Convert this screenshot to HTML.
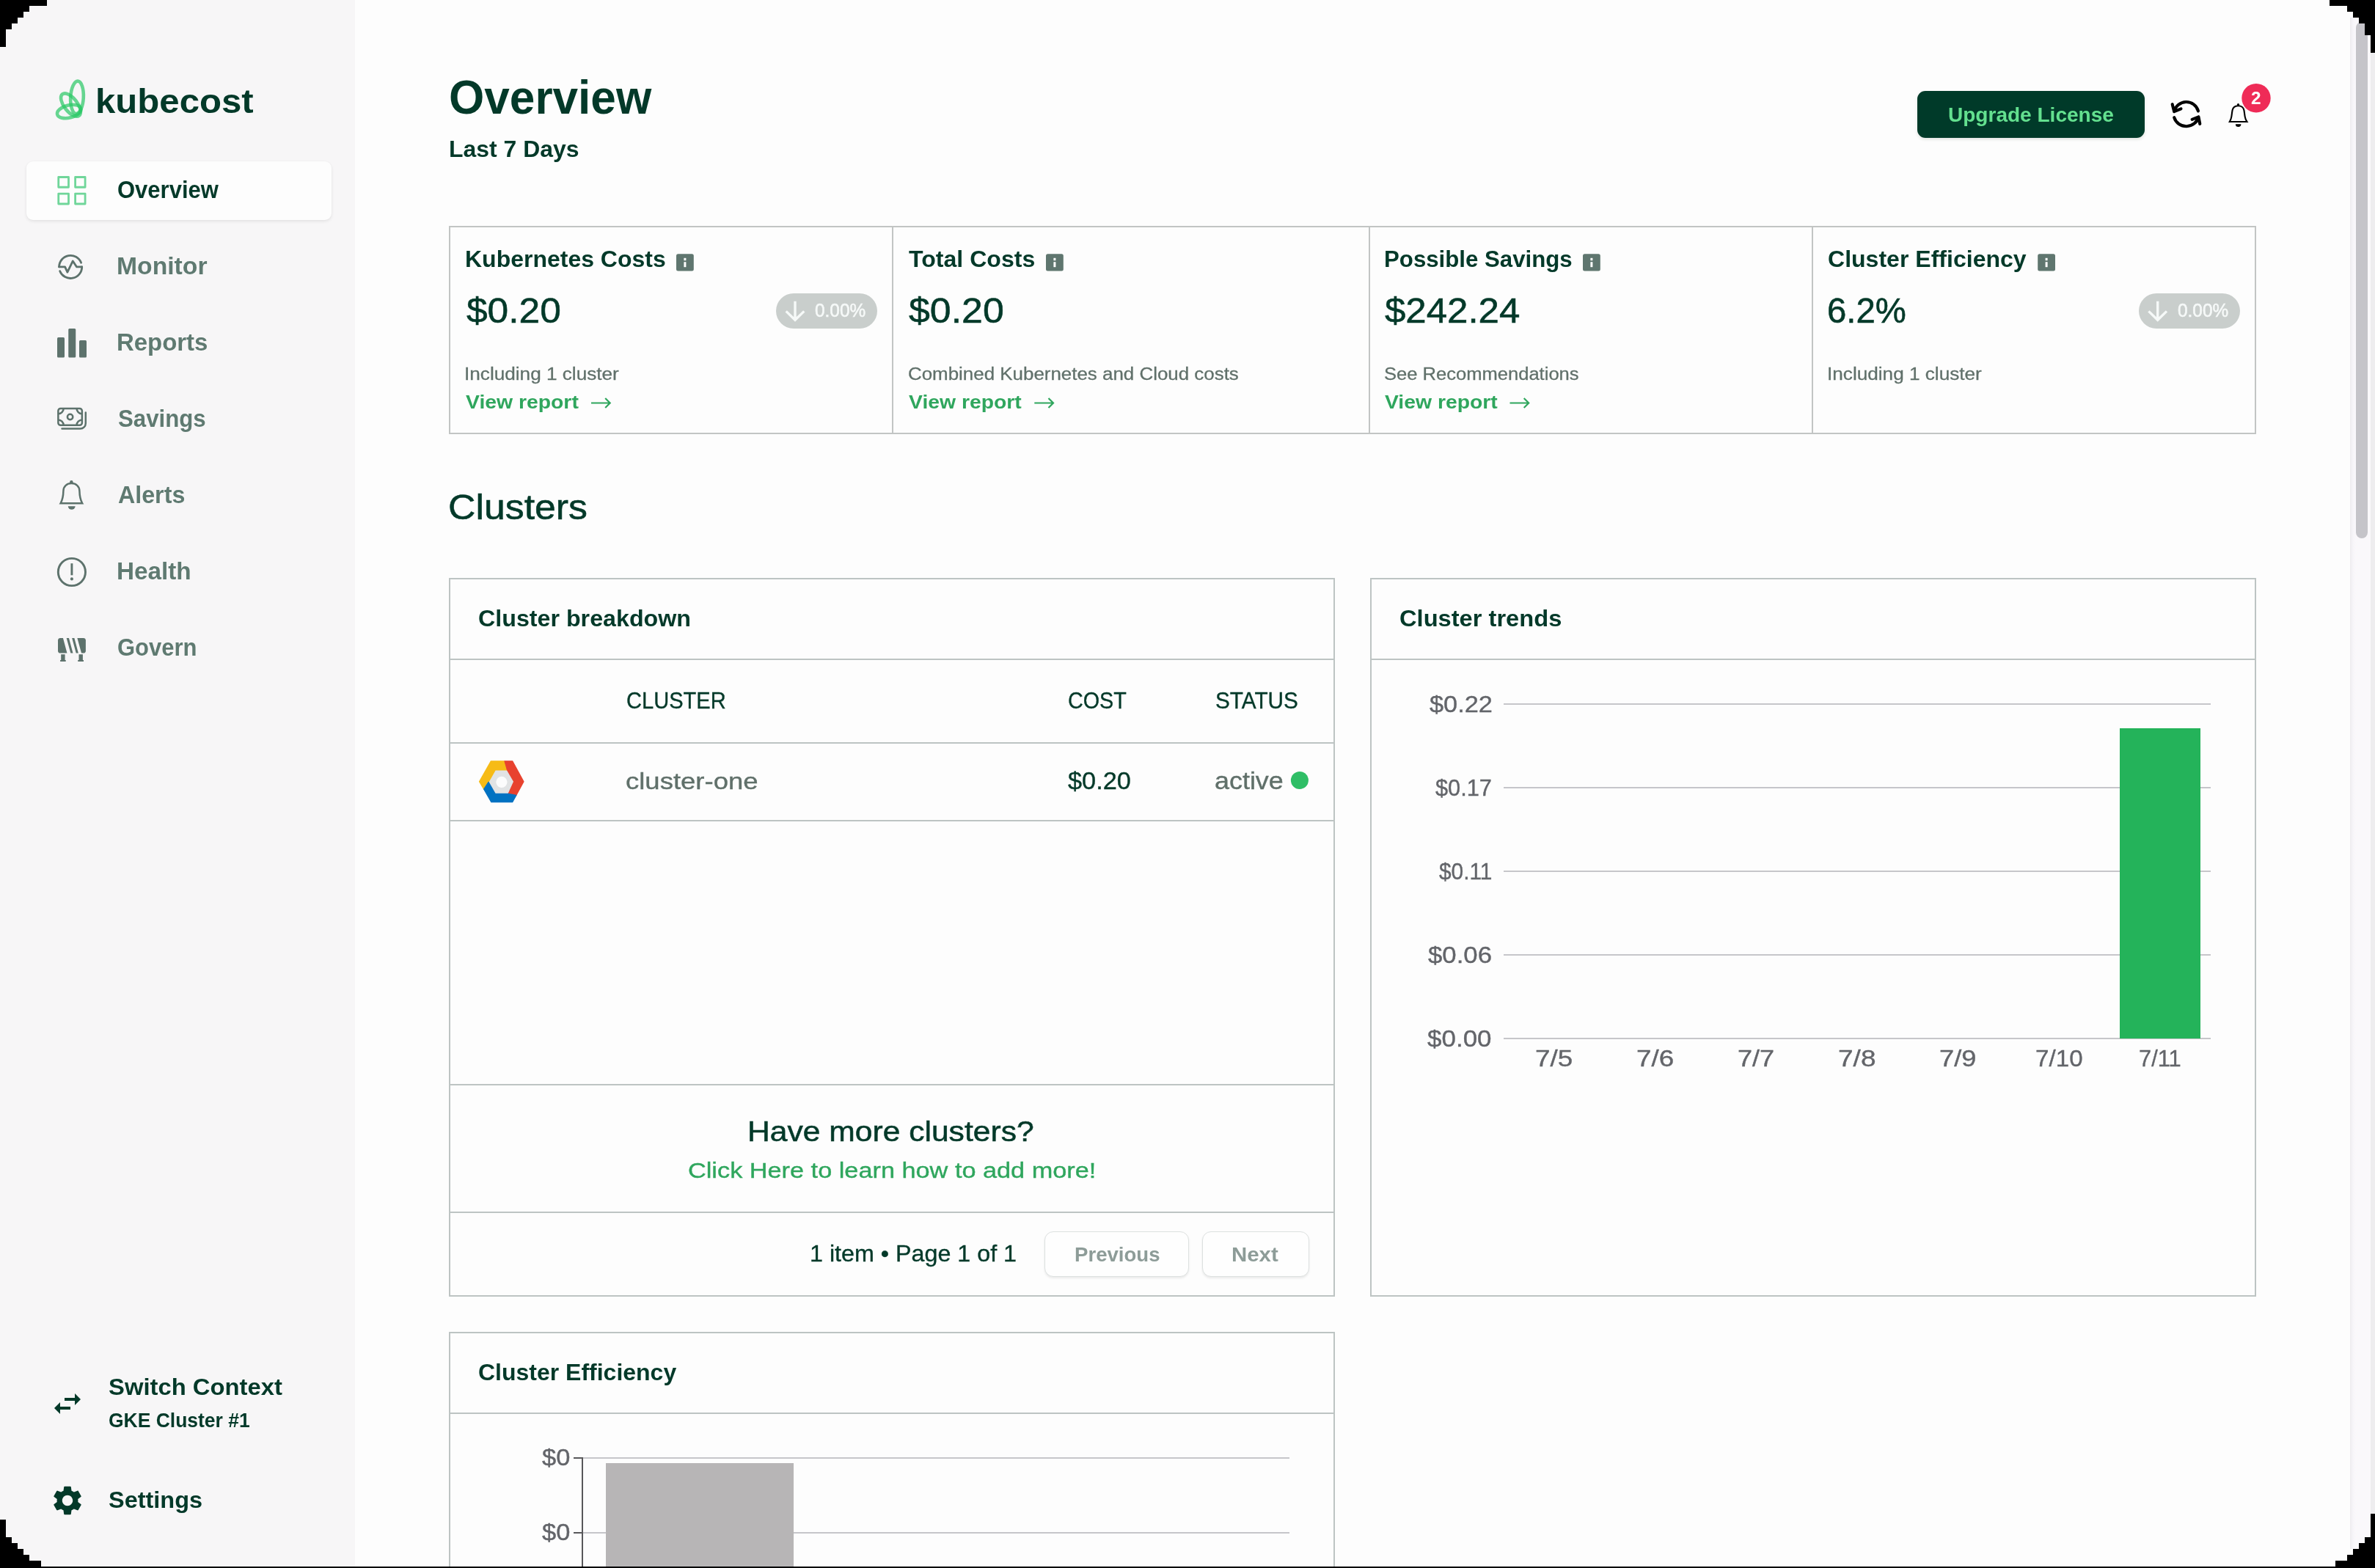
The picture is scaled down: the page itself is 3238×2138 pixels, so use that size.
<!DOCTYPE html>
<html><head><meta charset="utf-8"><title>Kubecost Overview</title>
<style>
html,body{margin:0;padding:0;overflow:hidden}
html{width:3238px;height:2138px}
body{width:3238px;height:2138px;position:relative;overflow:hidden;background:#fdfdfd;font-family:"Liberation Sans",sans-serif}
.a{position:absolute;box-sizing:border-box}
.t{position:absolute;white-space:nowrap;transform-origin:0 0;display:block}
</style></head><body>
<div class="a" style="left:0px;top:0px;width:484px;height:2138px;background:#f7f6f7"></div>
<div class="a" style="left:36px;top:220px;width:416px;height:80px;background:#fdfdfd;border-radius:9px;box-shadow:0 2px 4px rgba(0,0,0,.08),0 0 2px rgba(0,0,0,.04)"></div>
<div class="a" style="left:2614px;top:124px;width:310px;height:64px;background:#003a29;border-radius:11px;box-shadow:0 2px 4px rgba(0,40,20,.12)"></div>
<div class="a" style="left:612px;top:308px;width:2464px;height:284px;border:2px solid #c2c5c4"></div>
<div class="a" style="left:1216px;top:310px;width:2px;height:280px;background:#c2c5c4"></div>
<div class="a" style="left:1866px;top:310px;width:2px;height:280px;background:#c2c5c4"></div>
<div class="a" style="left:2470px;top:310px;width:2px;height:280px;background:#c2c5c4"></div>
<div class="a" style="left:1058px;top:400px;width:138px;height:48px;background:#c9cecc;border-radius:24px"></div>
<div class="a" style="left:2916px;top:400px;width:138px;height:48px;background:#c9cecc;border-radius:24px"></div>
<div class="a" style="left:612px;top:788px;width:1208px;height:980px;border:2px solid #bdc4c3"></div>
<div class="a" style="left:614px;top:898px;width:1204px;height:2px;background:#bdc4c3"></div>
<div class="a" style="left:614px;top:1012px;width:1204px;height:2px;background:#bdc4c3"></div>
<div class="a" style="left:614px;top:1118px;width:1204px;height:2px;background:#bdc4c3"></div>
<div class="a" style="left:614px;top:1478px;width:1204px;height:2px;background:#bdc4c3"></div>
<div class="a" style="left:614px;top:1652px;width:1204px;height:2px;background:#bdc4c3"></div>
<div class="a" style="left:1868px;top:788px;width:1208px;height:980px;border:2px solid #bdc4c3"></div>
<div class="a" style="left:1870px;top:898px;width:1204px;height:2px;background:#bdc4c3"></div>
<div class="a" style="left:612px;top:1816px;width:1208px;height:322px;border:2px solid #bdc4c3;border-bottom:none"></div>
<div class="a" style="left:614px;top:1926px;width:1204px;height:2px;background:#bdc4c3"></div>
<div class="a" style="left:1424px;top:1679px;width:197px;height:62px;background:#fefefe;border:1.5px solid #dde1e0;border-radius:12px;box-shadow:0 2px 3px rgba(0,0,0,.08)"></div>
<div class="a" style="left:1639px;top:1679px;width:146px;height:62px;background:#fefefe;border:1.5px solid #dde1e0;border-radius:12px;box-shadow:0 2px 3px rgba(0,0,0,.08)"></div>
<div class="a" style="left:2050px;top:959px;width:964px;height:2px;background:#c6c6ca"></div>
<div class="a" style="left:2050px;top:1073px;width:964px;height:2px;background:#c6c6ca"></div>
<div class="a" style="left:2050px;top:1187px;width:964px;height:2px;background:#c6c6ca"></div>
<div class="a" style="left:2050px;top:1301px;width:964px;height:2px;background:#c6c6ca"></div>
<div class="a" style="left:2050px;top:1415px;width:964px;height:2px;background:#c6c6ca"></div>
<div class="a" style="left:2890px;top:993px;width:110px;height:423px;background:#24b35a"></div>
<div class="a" style="left:794px;top:1987px;width:963.5px;height:2px;background:#c6c6ca"></div>
<div class="a" style="left:794px;top:2089px;width:963.5px;height:2px;background:#c6c6ca"></div>
<div class="a" style="left:826px;top:1995px;width:256px;height:143px;background:#b7b5b6"></div>
<div class="a" style="left:793px;top:1987px;width:2px;height:151px;background:#58585a"></div>
<div class="a" style="left:782px;top:1987px;width:12px;height:2px;background:#58585a"></div>
<div class="a" style="left:782px;top:2089px;width:12px;height:2px;background:#58585a"></div>
<div class="a" style="left:3204px;top:24px;width:28px;height:2088px;background:linear-gradient(90deg,#edebef 0,#f7f5f9 4px,#faf8fb 8px)"></div>
<div class="a" style="left:3232px;top:0px;width:6px;height:2138px;background:#eeedef"></div>
<div class="a" style="left:3212px;top:30px;width:16px;height:704px;background:#c5c4c9;border-radius:8px"></div>
<svg class="a" style="left:0;top:0" width="3238" height="2138" viewBox="0 0 3238 2138">
<g fill="none" stroke="#28c864" stroke-opacity=".7" stroke-width="4.6"><ellipse cx="105" cy="132.8" rx="8.8" ry="22.2" transform="rotate(3 105 132.8)"/><ellipse cx="96.5" cy="143" rx="9" ry="18.5" transform="rotate(-38 96.5 143)"/><ellipse cx="94.2" cy="152" rx="16.6" ry="8.6" transform="rotate(-14 94.2 152)"/></g>
<g fill="none" stroke="#70d69a" stroke-width="2.8" stroke-linejoin="round"><rect x="79.75" y="241.5" width="13.75" height="13.75"/><rect x="102.6" y="241.5" width="13.5" height="13.75"/><rect x="79.75" y="264.1" width="13.75" height="13.9"/><rect x="102.6" y="264.1" width="13.5" height="13.9"/></g>
<g fill="none" stroke="#5d726c" stroke-width="2.8" stroke-linecap="round" stroke-linejoin="round"><path d="M80.6 363.95H88.6L91.9 371.1L99.3 355.9L104.6 363.95H111.7"/><path d="M80.6 363.95A15.55 15.55 0 0 1 110.64 358.3"/><path d="M111.7 363.95A15.55 15.55 0 0 1 81.69 369.67"/></g>
<g fill="#5d726c"><rect x="78" y="460" width="10" height="27.5" rx="1.5"/><rect x="93.25" y="448" width="10" height="39.5" rx="1.5"/><rect x="108" y="464" width="10" height="23.5" rx="1.5"/></g>
<g fill="none" stroke="#5d726c" stroke-width="2.5"><rect x="79.35" y="557.05" width="32.5" height="22.7" rx="3.2"/><path d="M86.65 557.05A7.3 7.3 0 0 1 79.35 564.35M104.55 557.05A7.3 7.3 0 0 0 111.85 564.35M79.35 572.45A7.3 7.3 0 0 1 86.65 579.75M111.85 572.45A7.3 7.3 0 0 0 104.55 579.75"/><circle cx="95.6" cy="568.5" r="3.7"/><path d="M84.5 584.6H109.5A7.3 7.3 0 0 0 116.8 577.3V562.5" stroke-linecap="round"/></g>
<g><path d="M82.6 686.3C85.5 681 86.3 675.5 86.4 669.5C86.5 663 91.3 659.1 97.4 659.1C103.5 659.1 108.3 663 108.4 669.5C108.5 675.5 109.3 681 112.2 686.3Z" fill="none" stroke="#5d726c" stroke-width="2.5" stroke-linejoin="miter"/><circle cx="97.35" cy="657.4" r="2.3" fill="#5d726c"/><path d="M92.8 690.2H102.6A4.9 4.6 0 0 1 92.8 690.2Z" fill="#5d726c"/></g>
<g><circle cx="97.9" cy="780" r="18.6" fill="none" stroke="#5d726c" stroke-width="2.9"/><rect x="96.45" y="768.2" width="2.9" height="16.1" fill="#5d726c"/><circle cx="97.9" cy="789.4" r="2.05" fill="#5d726c"/></g>
<g><rect x="79" y="869.9" width="37.9" height="20.7" rx="3.4" fill="#5d726c"/><path d="M85.7 869H90.4L96.6 891.5H91.7ZM93.7 869H97.9L104 891.5H99.7ZM101.1 869H105.1L111.3 891.5H107.1Z" fill="#f7f6f7"/><path d="M83.2 892.2H88.6V900H89.7V902H82.1V900H83.2ZM107.5 892.2H112.9V900H114V902H106.2V900H107.5Z" fill="#5d726c"/></g>
<path transform="translate(68 1890) scale(2)" fill="#033929" d="M6.99 11 3 15l3.99 4v-3H14v-2H6.99v-3zM21 9l-3.99-4v3H10v2h7.01v3L21 9z"/>
<path transform="translate(68 2022) scale(2)" fill="#033929" d="M19.14 12.94c.04-.3.06-.61.06-.94 0-.32-.02-.64-.07-.94l2.03-1.58c.18-.14.23-.41.12-.61l-1.92-3.32c-.12-.22-.37-.29-.59-.22l-2.39.96c-.5-.38-1.03-.7-1.62-.94l-.36-2.54c-.04-.24-.24-.41-.48-.41h-3.84c-.24 0-.43.17-.47.41l-.36 2.54c-.59.24-1.13.57-1.62.94l-2.39-.96c-.22-.08-.47 0-.59.22L2.74 8.87c-.12.21-.08.47.12.61l2.03 1.58c-.05.3-.09.63-.09.94s.02.64.07.94l-2.03 1.58c-.18.14-.23.41-.12.61l1.92 3.32c.12.22.37.29.59.22l2.39-.96c.5.38 1.03.7 1.62.94l.36 2.54c.05.24.24.41.48.41h3.84c.24 0 .44-.17.47-.41l.36-2.54c.59-.24 1.13-.56 1.62-.94l2.39.96c.22.08.47 0 .59-.22l1.92-3.32c.12-.22.07-.47-.12-.61l-2.01-1.58zM12 15.6c-1.98 0-3.6-1.62-3.6-3.6s1.62-3.6 3.6-3.6 3.6 1.62 3.6 3.6-1.62 3.6-3.6 3.6z"/>
<g fill="none" stroke="#000" stroke-width="4.1" stroke-linecap="round" stroke-linejoin="round"><path d="M2997 151.4A16.85 16.5 0 0 0 2964.2 152.2M2961.7 142.2L2964.2 152.2L2973.5 148.4"/><path d="M2964.2 160.2A17.17 16.5 0 0 0 2997.45 159.4M2988.6 162.8L2997.45 159.4L2999.3 169"/></g>
<g><path d="M3039.8 166C3041.3 163.5 3042 161 3042.3 159.1C3042.9 155.5 3043.1 152.5 3043.6 150.2C3044.6 146 3048 144.3 3051.5 144.3C3055 144.3 3058.4 146 3059.4 150.2C3059.9 152.5 3060.1 155.5 3060.7 159.1C3061 161 3061.7 163.5 3063.5 166Z" fill="none" stroke="#000" stroke-width="2.1"/><circle cx="3051.5" cy="142.6" r="1.6" fill="#000"/><path d="M3047.8 169.3H3055.4A3.8 3.8 0 0 1 3047.8 169.3Z" fill="#000"/></g>
<circle cx="3076" cy="133.8" r="19.7" fill="#ef2b57"/>
<rect x="922" y="346.2" width="23.8" height="23.4" rx="2.5" fill="#5f766f"/><rect x="932.4" y="351.8" width="3" height="3.4" fill="#fff"/><rect x="932.4" y="357.2" width="3" height="7" fill="#fff"/>
<rect x="1426" y="346.2" width="23.8" height="23.4" rx="2.5" fill="#5f766f"/><rect x="1436.4" y="351.8" width="3" height="3.4" fill="#fff"/><rect x="1436.4" y="357.2" width="3" height="7" fill="#fff"/>
<rect x="2158" y="346.2" width="23.8" height="23.4" rx="2.5" fill="#5f766f"/><rect x="2168.4" y="351.8" width="3" height="3.4" fill="#fff"/><rect x="2168.4" y="357.2" width="3" height="7" fill="#fff"/>
<rect x="2778.2" y="346.2" width="23.8" height="23.4" rx="2.5" fill="#5f766f"/><rect x="2788.6" y="351.8" width="3" height="3.4" fill="#fff"/><rect x="2788.6" y="357.2" width="3" height="7" fill="#fff"/>
<path d="M1084 410.8V435.6M1071.7 424.4L1084 436.3L1096.3 424.4" fill="none" stroke="#f6f9f8" stroke-width="3.4"/>
<path d="M2941.7 410.8V435.6M2929.3999999999996 424.4L2941.7 436.3L2954.0 424.4" fill="none" stroke="#f6f9f8" stroke-width="3.4"/>
<path d="M806 549.5H831.6M825.2 543L831.7 549.5L825.2 556" fill="none" stroke="#2fa65d" stroke-width="2.2"/>
<path d="M1410.3 549.5H1435.8999999999999M1429.5 543L1436.0 549.5L1429.5 556" fill="none" stroke="#2fa65d" stroke-width="2.2"/>
<path d="M2058.5 549.5H2084.1M2077.7 543L2084.2 549.5L2077.7 556" fill="none" stroke="#2fa65d" stroke-width="2.2"/>
<defs><filter id="bl" x="-10%" y="-10%" width="120%" height="120%"><feGaussianBlur stdDeviation="0.55"/></filter></defs><g filter="url(#bl)">
<polygon points="653.5,1065.8 669.3,1037.8 698.7,1037.8 714.0,1065.8 698.7,1093.6 669.8,1093.6" fill="#e1e3e4"/>
<polygon points="653.5,1065.8 669.3,1037.8 688.0,1037.8 691.5,1050.0 675.2,1050.0 666.0,1066.3 659.6,1076.0" fill="#f6bb18" stroke="#f6bb18" stroke-width="1.2" stroke-linejoin="round"/>
<polygon points="688.0,1037.8 698.7,1037.8 714.0,1065.8 703.8,1084.4 693.1,1082.4 700.7,1065.8 691.5,1050.0" fill="#e8432f" stroke="#e8432f" stroke-width="1.2" stroke-linejoin="round"/>
<polygon points="659.6,1076.0 666.0,1066.3 675.2,1082.4 693.1,1082.4 703.8,1084.4 698.7,1093.6 669.8,1093.6" fill="#0672c2" stroke="#0672c2" stroke-width="1.2" stroke-linejoin="round"/>
<circle cx="683.9" cy="1066.3" r="7.6" fill="#fcfcfc"/></g>
<circle cx="1771.9" cy="1063.9" r="12" fill="#2fbe66"/>
</svg>
<span class="t" style="left:130.23px;top:114.00px;font-size:46.98px;line-height:46.98px;transform:scaleX(1.0459);color:#033929;font-weight:700;">kubecost</span>
<span class="t" style="left:160.03px;top:243.00px;font-size:32.71px;line-height:32.71px;transform:scaleX(0.9477);color:#033929;font-weight:700;">Overview</span>
<span class="t" style="left:158.89px;top:347.00px;font-size:32.71px;line-height:32.71px;transform:scaleX(1.0307);color:#5f7a71;font-weight:700;">Monitor</span>
<span class="t" style="left:158.94px;top:451.00px;font-size:32.71px;line-height:32.71px;transform:scaleX(1.0065);color:#5f7a71;font-weight:700;">Reports</span>
<span class="t" style="left:160.51px;top:555.00px;font-size:32.71px;line-height:32.71px;transform:scaleX(0.9546);color:#5f7a71;font-weight:700;">Savings</span>
<span class="t" style="left:160.50px;top:659.00px;font-size:32.71px;line-height:32.71px;transform:scaleX(0.9848);color:#5f7a71;font-weight:700;">Alerts</span>
<span class="t" style="left:158.92px;top:763.00px;font-size:32.71px;line-height:32.71px;transform:scaleX(1.0172);color:#5f7a71;font-weight:700;">Health</span>
<span class="t" style="left:160.03px;top:867.00px;font-size:32.71px;line-height:32.71px;transform:scaleX(0.9471);color:#5f7a71;font-weight:700;">Govern</span>
<span class="t" style="left:148.24px;top:1876.00px;font-size:31.86px;line-height:31.86px;transform:scaleX(1.0297);color:#033929;font-weight:700;">Switch Context</span>
<span class="t" style="left:147.92px;top:1923.00px;font-size:27.73px;line-height:27.73px;transform:scaleX(0.9546);color:#033929;font-weight:700;">GKE Cluster #1</span>
<span class="t" style="left:148.24px;top:2029.00px;font-size:32.00px;line-height:32.00px;transform:scaleX(1.0146);color:#033929;font-weight:700;">Settings</span>
<span class="t" style="left:612.06px;top:101.00px;font-size:64.57px;line-height:64.57px;transform:scaleX(0.9619);color:#033929;font-weight:700;">Overview</span>
<span class="t" style="left:611.50px;top:187.00px;font-size:32.21px;line-height:32.21px;transform:scaleX(0.9915);color:#033929;font-weight:700;">Last 7 Days</span>
<span class="t" style="left:2655.69px;top:143.00px;font-size:27.73px;line-height:27.73px;transform:scaleX(1.0113);color:#63e08f;font-weight:700;">Upgrade License</span>
<span class="t" style="left:3069.14px;top:122.00px;font-size:24.46px;line-height:24.46px;transform:scaleX(0.9975);color:#ffffff;font-weight:700;">2</span>
<span class="t" style="left:634.00px;top:339.00px;font-size:30.93px;line-height:30.93px;transform:scaleX(1.0343);color:#033929;font-weight:700;">Kubernetes Costs</span>
<span class="t" style="left:1239.00px;top:339.00px;font-size:30.93px;line-height:30.93px;transform:scaleX(1.0371);color:#033929;font-weight:700;">Total Costs</span>
<span class="t" style="left:1886.55px;top:339.00px;font-size:30.93px;line-height:30.93px;transform:scaleX(1.0093);color:#033929;font-weight:700;">Possible Savings</span>
<span class="t" style="left:2491.60px;top:339.00px;font-size:30.93px;line-height:30.93px;transform:scaleX(1.0363);color:#033929;font-weight:700;">Cluster Efficiency</span>
<span class="t" style="left:636.00px;top:399.00px;font-size:48.71px;line-height:48.71px;transform:scaleX(1.0565);color:#033929;-webkit-text-stroke:0.58px #033929;">$0.20</span>
<span class="t" style="left:1239.00px;top:399.00px;font-size:48.71px;line-height:48.71px;transform:scaleX(1.0648);color:#033929;-webkit-text-stroke:0.58px #033929;">$0.20</span>
<span class="t" style="left:1888.30px;top:399.00px;font-size:48.71px;line-height:48.71px;transform:scaleX(1.0471);color:#033929;-webkit-text-stroke:0.58px #033929;">$242.24</span>
<span class="t" style="left:2491.38px;top:399.00px;font-size:48.71px;line-height:48.71px;transform:scaleX(0.9712);color:#033929;-webkit-text-stroke:0.58px #033929;">6.2%</span>
<span class="t" style="left:632.71px;top:498.00px;font-size:23.82px;line-height:23.82px;transform:scaleX(1.0985);color:#60706a;-webkit-text-stroke:0.29px #60706a;">Including 1 cluster</span>
<span class="t" style="left:1237.78px;top:498.00px;font-size:23.82px;line-height:23.82px;transform:scaleX(1.0881);color:#60706a;-webkit-text-stroke:0.29px #60706a;">Combined Kubernetes and Cloud costs</span>
<span class="t" style="left:1886.90px;top:498.00px;font-size:23.82px;line-height:23.82px;transform:scaleX(1.0730);color:#60706a;-webkit-text-stroke:0.29px #60706a;">See Recommendations</span>
<span class="t" style="left:2490.56px;top:498.00px;font-size:23.82px;line-height:23.82px;transform:scaleX(1.0982);color:#60706a;-webkit-text-stroke:0.29px #60706a;">Including 1 cluster</span>
<span class="t" style="left:634.75px;top:535.00px;font-size:26.67px;line-height:26.67px;transform:scaleX(1.0632);color:#2fa65d;font-weight:700;">View report</span>
<span class="t" style="left:1239.00px;top:535.00px;font-size:26.67px;line-height:26.67px;transform:scaleX(1.0629);color:#2fa65d;font-weight:700;">View report</span>
<span class="t" style="left:1887.70px;top:535.00px;font-size:26.67px;line-height:26.67px;transform:scaleX(1.0622);color:#2fa65d;font-weight:700;">View report</span>
<span class="t" style="left:1111.14px;top:410.00px;font-size:26.45px;line-height:26.45px;transform:scaleX(0.9224);color:#f6f9f8;-webkit-text-stroke:0.6px #f6f9f8;">0.00%</span>
<span class="t" style="left:2969.14px;top:410.00px;font-size:26.45px;line-height:26.45px;transform:scaleX(0.9224);color:#f6f9f8;-webkit-text-stroke:0.6px #f6f9f8;">0.00%</span>
<span class="t" style="left:611.07px;top:667.00px;font-size:48.71px;line-height:48.71px;transform:scaleX(1.0638);color:#033929;-webkit-text-stroke:0.58px #033929;">Clusters</span>
<span class="t" style="left:651.74px;top:828.00px;font-size:31.29px;line-height:31.29px;transform:scaleX(1.0298);color:#033929;font-weight:700;">Cluster breakdown</span>
<span class="t" style="left:1907.98px;top:828.00px;font-size:31.29px;line-height:31.29px;transform:scaleX(1.0435);color:#033929;font-weight:700;">Cluster trends</span>
<span class="t" style="left:853.89px;top:939.00px;font-size:32.00px;line-height:32.00px;transform:scaleX(0.9080);color:#033929;-webkit-text-stroke:0.38px #033929;">CLUSTER</span>
<span class="t" style="left:1456.15px;top:939.00px;font-size:32.00px;line-height:32.00px;transform:scaleX(0.8982);color:#033929;-webkit-text-stroke:0.38px #033929;">COST</span>
<span class="t" style="left:1657.07px;top:939.00px;font-size:32.00px;line-height:32.00px;transform:scaleX(0.9296);color:#033929;-webkit-text-stroke:0.38px #033929;">STATUS</span>
<span class="t" style="left:852.86px;top:1050.00px;font-size:31.66px;line-height:31.66px;transform:scaleX(1.1533);color:#60706a;-webkit-text-stroke:0.38px #60706a;">cluster-one</span>
<span class="t" style="left:1456.25px;top:1049.00px;font-size:32.36px;line-height:32.36px;transform:scaleX(1.0604);color:#033929;-webkit-text-stroke:0.39px #033929;">$0.20</span>
<span class="t" style="left:1655.88px;top:1048.00px;font-size:33.90px;line-height:33.90px;transform:scaleX(1.0594);color:#60706a;-webkit-text-stroke:0.41px #60706a;">active</span>
<span class="t" style="left:1019.17px;top:1523.00px;font-size:39.11px;line-height:39.11px;transform:scaleX(1.0892);color:#033929;-webkit-text-stroke:0.55px #033929;">Have more clusters?</span>
<span class="t" style="left:937.89px;top:1581.00px;font-size:29.87px;line-height:29.87px;transform:scaleX(1.1480);color:#2fa65d;-webkit-text-stroke:0.36px #2fa65d;">Click Here to learn how to add more!</span>
<span class="t" style="left:1104.23px;top:1694.00px;font-size:31.29px;line-height:31.29px;transform:scaleX(1.0310);color:#033929;-webkit-text-stroke:0.38px #033929;">1 item • Page 1 of 1</span>
<span class="t" style="left:1464.52px;top:1697.00px;font-size:27.73px;line-height:27.73px;transform:scaleX(0.9953);color:#8d9c98;font-weight:700;">Previous</span>
<span class="t" style="left:1679.41px;top:1697.00px;font-size:27.73px;line-height:27.73px;transform:scaleX(1.0602);color:#8d9c98;font-weight:700;">Next</span>
<span class="t" style="left:652.00px;top:1857.00px;font-size:30.93px;line-height:30.93px;transform:scaleX(1.0344);color:#033929;font-weight:700;">Cluster Efficiency</span>
<span class="t" style="left:1948.50px;top:945.00px;font-size:31.29px;line-height:31.29px;transform:scaleX(1.0970);color:#63656a;-webkit-text-stroke:0.38px #63656a;">$0.22</span>
<span class="t" style="left:1957.25px;top:1059.00px;font-size:31.29px;line-height:31.29px;transform:scaleX(0.9834);color:#63656a;-webkit-text-stroke:0.38px #63656a;">$0.17</span>
<span class="t" style="left:1961.75px;top:1173.00px;font-size:31.29px;line-height:31.29px;transform:scaleX(0.9537);color:#63656a;-webkit-text-stroke:0.38px #63656a;">$0.11</span>
<span class="t" style="left:1947.40px;top:1287.00px;font-size:31.29px;line-height:31.29px;transform:scaleX(1.1112);color:#63656a;-webkit-text-stroke:0.38px #63656a;">$0.06</span>
<span class="t" style="left:1946.30px;top:1401.00px;font-size:31.29px;line-height:31.29px;transform:scaleX(1.1184);color:#63656a;-webkit-text-stroke:0.38px #63656a;">$0.00</span>
<span class="t" style="left:2093.13px;top:1428.00px;font-size:31.29px;line-height:31.29px;transform:scaleX(1.1776);color:#63656a;-webkit-text-stroke:0.38px #63656a;">7/5</span>
<span class="t" style="left:2230.84px;top:1428.00px;font-size:31.29px;line-height:31.29px;transform:scaleX(1.1776);color:#63656a;-webkit-text-stroke:0.38px #63656a;">7/6</span>
<span class="t" style="left:2369.09px;top:1428.00px;font-size:31.29px;line-height:31.29px;transform:scaleX(1.1531);color:#63656a;-webkit-text-stroke:0.38px #63656a;">7/7</span>
<span class="t" style="left:2506.14px;top:1428.00px;font-size:31.29px;line-height:31.29px;transform:scaleX(1.1837);color:#63656a;-webkit-text-stroke:0.38px #63656a;">7/8</span>
<span class="t" style="left:2644.39px;top:1428.00px;font-size:31.29px;line-height:31.29px;transform:scaleX(1.1592);color:#63656a;-webkit-text-stroke:0.38px #63656a;">7/9</span>
<span class="t" style="left:2774.75px;top:1428.00px;font-size:31.29px;line-height:31.29px;transform:scaleX(1.0614);color:#63656a;-webkit-text-stroke:0.38px #63656a;">7/10</span>
<span class="t" style="left:2916.20px;top:1428.00px;font-size:31.29px;line-height:31.29px;transform:scaleX(0.9850);color:#63656a;-webkit-text-stroke:0.38px #63656a;">7/11</span>
<span class="t" style="left:738.75px;top:1972.00px;font-size:31.29px;line-height:31.29px;transform:scaleX(1.1022);color:#63656a;-webkit-text-stroke:0.38px #63656a;">$0</span>
<span class="t" style="left:738.75px;top:2074.00px;font-size:31.29px;line-height:31.29px;transform:scaleX(1.1022);color:#63656a;-webkit-text-stroke:0.38px #63656a;">$0</span>
<svg class="a" style="left:0;top:0" width="3238" height="2138" viewBox="0 0 3238 2138" shape-rendering="crispEdges" fill="#000"><rect x="0" y="0" width="64" height="8"/><rect x="0" y="8" width="40" height="8"/><rect x="0" y="16" width="32" height="8"/><rect x="0" y="24" width="24" height="8"/><rect x="0" y="32" width="16" height="8"/><rect x="0" y="40" width="8" height="24"/><rect x="3176" y="0" width="62" height="8"/><rect x="3200" y="8" width="38" height="8"/><rect x="3208" y="16" width="30" height="8"/><rect x="3216" y="24" width="22" height="8"/><rect x="3224" y="32" width="14" height="16"/><rect x="3232" y="48" width="6" height="24"/><rect x="0" y="2072" width="8" height="66"/><rect x="8" y="2096" width="8" height="42"/><rect x="16" y="2104" width="8" height="34"/><rect x="24" y="2112" width="8" height="26"/><rect x="32" y="2120" width="8" height="18"/><rect x="40" y="2128" width="16" height="10"/><rect x="3232" y="2064" width="6" height="74"/><rect x="3224" y="2096" width="8" height="42"/><rect x="3216" y="2104" width="8" height="34"/><rect x="3208" y="2112" width="8" height="26"/><rect x="3200" y="2120" width="8" height="18"/><rect x="3184" y="2128" width="16" height="10"/><rect x="0" y="2136" width="3238" height="2"/></svg>
</body></html>
